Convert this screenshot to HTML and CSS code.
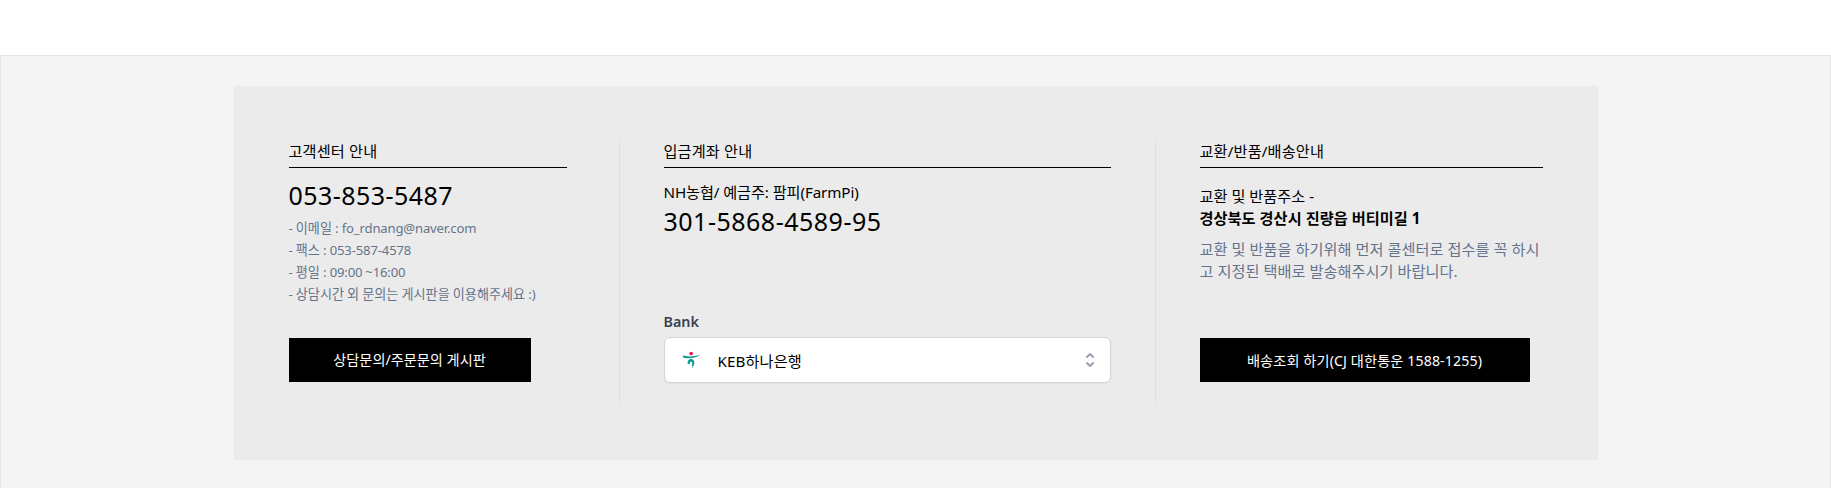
FILE: index.html
```
<!DOCTYPE html>
<html lang="ko">
  <head>
    <meta charset="UTF-8" />
    <meta name="viewport" content="width=device-width, initial-scale=1.0" />
    <title>FarmPi</title>
    <link rel="stylesheet" href="styles.css">
  </head>
  <body>
    <footer class="footer">
      <div class="info-panel">
        <!-- Customer center -->
        <section class="info-col">
          <h2>고객센터 안내</h2>
          <p class="phone">053-853-5487</p>
          <ul class="contact-list">
            <li>- 이메일 : <span class="latin">fo_rdnang@naver.com</span></li>
            <li>- 팩스 : <span class="latin">053-587-4578</span></li>
            <li>- 평일 : <span class="latin">09:00 ~16:00</span></li>
            <li>- 상담시간 외 문의는 게시판을 이용해주세요 :)</li>
          </ul>
          <button class="btn btn-board">상담문의/주문문의 게시판</button>
        </section>

        <!-- Bank account -->
        <section class="info-col">
          <h2>입금계좌 안내</h2>
          <p class="account-owner">NH농협/ 예금주: 팜피(FarmPi)</p>
          <p class="account-number">301-5868-4589-95</p>
          <div class="bank">
            <label id="bankLabel">Bank</label>
            <button class="bank-select" aria-labelledby="bankLabel">
              <svg class="bank-logo" width="20" height="20" viewBox="0 0 20 20">
                <circle cx="9.2" cy="3.6" r="1.8" fill="#ed1651" />
                <path d="M.8 5.600C6 7 13 6.400 18.200 4.800C17 6.300 13.500 7.500 10 7.900C6.500 8.300 2.500 8.200 1.200 7.400Z" fill="#129b94" />
                <path d="M5.800 13.900C5 10.500 7.300 9 9.500 9.100C13.300 9.500 13.300 15 9.800 18.300C10.300 15.500 10.700 12.300 9.300 11.800C8 11.500 8 13.200 7.700 13.900Z" fill="#129b94" />
              </svg>
              <span class="bank-name">KEB하나은행</span>
              <svg class="bank-arrow" width="20" height="20" viewBox="0 0 20 20" fill="#9ca3af">
                <path d="M10 3a1 1 0 01.707.293l3 3a1 1 0 01-1.414 1.414L10 5.414 7.707 7.707a1 1 0 01-1.414-1.414l3-3A1 1 0 0110 3zm-3.707 9.293a1 1 0 011.414 0L10 14.586l2.293-2.293a1 1 0 011.414 1.414l-3 3a1 1 0 01-1.414 0l-3-3a1 1 0 010-1.414z" />
              </svg>
            </button>
          </div>
        </section>

        <!-- Exchange / return / delivery -->
        <section class="info-col">
          <h2>교환/반품/배송안내</h2>
          <p class="address">교환 및 반품주소 -<br><strong>경상북도 경산시 진량읍 버티미길 1</strong></p>
          <p class="notice">교환 및 반품을 하기위해 먼저 콜센터로 접수를 꼭 하시고 지정된 택배로 발송해주시기 바랍니다.</p>
          <button class="btn btn-delivery">배송조회 하기(CJ 대한통운 1588-1255)</button>
        </section>
      </div>
    </footer>
  </body>
</html>
```
FILE: styles.css
```
* {
  box-sizing: border-box;
}

body {
  margin: 0;
  padding-top: 55px;
  background: #fff;
  color: #000;
  font-family: "Noto Sans", "Noto Sans CJK KR", sans-serif;
  font-size: 15.2px;
}

h2,
p,
ul {
  margin: 0;
  padding: 0;
}

button {
  font-family: inherit;
  cursor: pointer;
}

/* Footer */
.footer {
  height: 433px;
  padding-top: 30px;
  background: #f4f4f4;
  border: 1px solid #e5e5e5;
  border-bottom: none;
}

.info-panel {
  display: grid;
  grid-template-columns: 330px 536px 388px;
  width: 1364px;
  height: 374px;
  margin: 0 auto;
  padding: 55px 55px;
  background: #ebebeb;
}

/* Columns */
.info-col {
  display: flex;
  flex-direction: column;
  align-items: flex-start;
  height: 264px;
  padding-bottom: 23px;
}

.info-col:first-child {
  padding-right: 52px;
}

.info-col + .info-col {
  padding-left: 44px;
  border-left: 1px solid #e0e0e0;
}

.info-col:nth-child(2) {
  padding-right: 44px;
  padding-bottom: 22px;
}

.info-col h2 {
  width: 100%;
  height: 27px;
  border-bottom: 1px solid #000;
  font-size: 15.2px;
  font-weight: 400;
  line-height: 20px;
  letter-spacing: 0.15px;
}

/* Customer center */
.phone {
  margin-top: 9px;
  font-size: 25px;
  line-height: 36px;
  letter-spacing: 0.45px;
}

.contact-list {
  margin-top: 4px;
  color: #64748b;
  font-size: 13.1px;
  line-height: 22px;
  list-style: none;
  word-spacing: -0.3px;
}

.latin {
  letter-spacing: -0.15px;
}

/* Buttons */
.btn {
  height: 44px;
  margin-top: auto;
  padding: 0 0 2px;
  border: none;
  background: #000;
  color: #fff;
  font-size: 14.2px;
}

.btn-board {
  width: 242px;
}

.btn-delivery {
  width: 330px;
  padding-bottom: 0;
  letter-spacing: 0.1px;
}

/* Bank account */
.account-owner {
  margin-top: 13px;
  line-height: 22px;
  letter-spacing: -0.1px;
}

.account-number {
  font-size: 25px;
  line-height: 37px;
  letter-spacing: 0.5px;
}

.bank {
  width: 100%;
  margin-top: auto;
}

.bank label {
  display: block;
  margin-bottom: 5px;
  color: #374151;
  font-size: 14.3px;
  font-weight: 600;
  line-height: 20px;
}

.bank-select {
  display: flex;
  align-items: center;
  width: 100%;
  height: 46px;
  padding: 0 10px 0 17px;
  border: 1px solid #d1d5db;
  border-radius: 6px;
  background: #fff;
  box-shadow: 0 1px 2px rgba(0, 0, 0, 0.05);
  color: #000;
  font-size: 15.2px;
}

.bank-name {
  flex: 1;
  margin-left: 16px;
  text-align: left;
  letter-spacing: 0.1px;
}

/* Exchange / return */
.address {
  margin-top: 17px;
  line-height: 22px;
}

.address strong {
  letter-spacing: 0.05px;
}

.notice {
  margin-top: 9px;
  color: #64748b;
  line-height: 22px;
  letter-spacing: 0.03px;
  word-break: break-all;
}
```
